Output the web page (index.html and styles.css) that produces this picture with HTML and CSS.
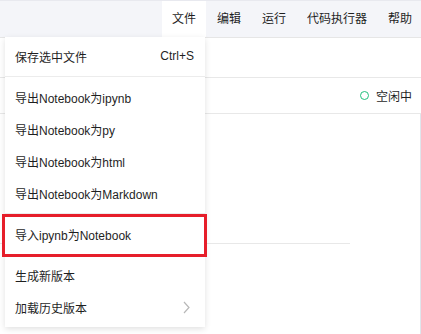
FILE: index.html
```html
<!DOCTYPE html>
<html lang="zh-CN">
<head>
  <meta charset="UTF-8" />
  <title>Notebook</title>
  <link rel="stylesheet" href="styles.css">
</head>
<body>
  <!-- Top menu bar -->
  <div class="topbar">
    <div class="tab active">文件</div>
    <div class="tab">编辑</div>
    <div class="tab">运行</div>
    <div class="tab">代码执行器</div>
    <div class="tab">帮助</div>
  </div>

  <div class="toolbar"></div>
  <div class="status">
    <span class="dot"></span>
    <span>空闲中</span>
  </div>
  <div class="content">
    <div class="cell-line"></div>
  </div>

  <!-- File dropdown -->
  <div class="menu">
    <div class="item"><span>保存选中文件</span><span>Ctrl+S</span></div>
    <div class="divider"></div>
    <div class="item">导出Notebook为ipynb</div>
    <div class="item">导出Notebook为py</div>
    <div class="item">导出Notebook为html</div>
    <div class="item">导出Notebook为Markdown</div>
    <div class="divider"></div>
    <div class="item">导入ipynb为Notebook</div>
    <div class="divider"></div>
    <div class="item">生成新版本</div>
    <div class="item">
      <span>加载历史版本</span>
      <svg class="chev" width="7" height="13" viewBox="0 0 7 13"><path d="M1 1 L6 6.5 L1 12" fill="none" stroke="#b8b8b8" stroke-width="1.2"/></svg>
    </div>
  </div>

  <div class="highlight"></div>
</body>
</html>
```

FILE: styles.css
```css
body {
  margin: 0;
  padding: 0;
  width: 421px;
  height: 334px;
  overflow: hidden;
  position: relative;
  background: #ffffff;
  font-family: "Liberation Sans", "Noto Sans CJK SC", sans-serif;
  font-size: 12px;
  color: #1f1f1f;
}
.topbar {
  display: flex;
  gap: 1px;
  height: 36px;
  padding-left: 162px;
  background: #f4f5f9;
  border-top: 1px solid #e8e9ef;
  border-bottom: 1px solid #e6e6e6;
  white-space: nowrap;
}
.tab {
  padding: 0 10px;
  line-height: 36px;
  flex-shrink: 0;
}
.tab.active { background: #ffffff; }
.toolbar {
  height: 39px;
  border-bottom: 1px solid #e8e8e8;
}
.status {
  display: flex;
  justify-content: flex-end;
  align-items: center;
  gap: 7px;
  height: 35px;
  padding-right: 9px;
  border-bottom: 1px solid #e8e8e8;
}
.dot {
  width: 7px;
  height: 7px;
  border: 1.5px solid #22c07d;
  border-radius: 50%;
}
.content {
  height: 230px;
  border-right: 1px solid #dfe6ec;
}
.cell-line {
  width: 350px;
  height: 129px;
  border-bottom: 1px solid #e8e8e8;
}
.menu {
  position: absolute;
  left: 5px;
  top: 37px;
  width: 200px;
  padding: 3px 0 4px;
  background: #ffffff;
  box-shadow: 0 2px 6px rgba(0, 0, 0, 0.12);
}
.item {
  display: flex;
  justify-content: space-between;
  align-items: center;
  height: 32px;
  padding: 0 11px 0 10px;
}
.chev { margin-right: 4px; }
.divider {
  height: 1px;
  margin: 4px 0;
  background: #ececec;
}
.highlight {
  position: absolute;
  left: 2px;
  top: 214px;
  width: 199px;
  height: 37px;
  border: 3px solid #e61e2a;
}
```
